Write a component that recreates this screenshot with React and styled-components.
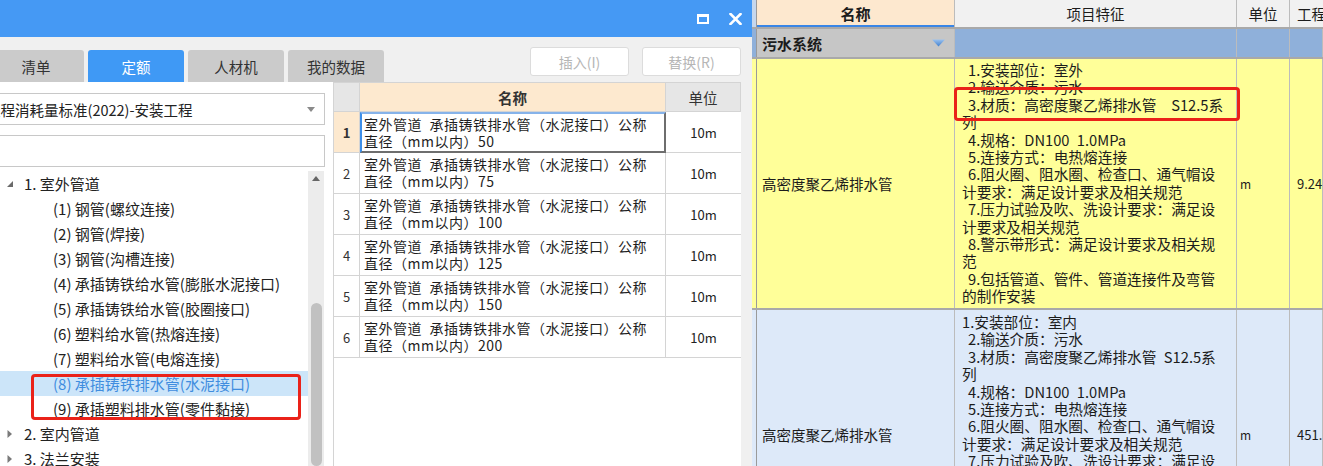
import React from "react";
import styled, { createGlobalStyle } from "styled-components";

const GlobalStyle = createGlobalStyle`
  html, body {
    margin: 0;
    padding: 0;
    background: #fff;
    overflow: hidden;
  }
  body {
    font-family: "Noto Sans CJK SC", "Noto Sans", sans-serif;
    color: #222;
  }
  * { box-sizing: border-box; }
`;

const Screen = styled.div`
  display: flex;
  width: 1323px;
  height: 466px;
  overflow: hidden;
`;

/* ---------- dialog ---------- */

const Dialog = styled.div`
  flex: none;
  width: 773px;
  margin-left: -21px;
  display: flex;
  flex-direction: column;
  background: #f0f0f0;
`;

const TitleBar = styled.div`
  height: 37px;
  flex: none;
  background: #4599f4;
  display: flex;
  justify-content: flex-end;
  align-items: center;
  gap: 20px;
  padding-right: 10px;
`;

const Toolbar = styled.div`
  height: 45px;
  flex: none;
  display: flex;
  justify-content: space-between;
  padding: 0 11px 0 9px;
`;

const Tabs = styled.div`
  display: flex;
  gap: 4px;
  align-self: flex-end;
`;

const Tab = styled.div`
  width: 96px;
  height: 32px;
  display: flex;
  align-items: center;
  justify-content: center;
  font-size: 14.5px;
  border-radius: 3px 3px 0 0;
  background: ${(p) => (p.active ? "#3f99f5" : "#cbcbcb")};
  color: ${(p) => (p.active ? "#fff" : "#333")};
`;

const Buttons = styled.div`
  display: flex;
  gap: 13px;
  margin-top: 10px;
  align-self: flex-start;
`;

const Button = styled.div`
  width: 99px;
  height: 29px;
  border: 1px solid #dcdcdc;
  border-radius: 3px;
  background: #fff;
  color: #b6b6b6;
  font-size: 14px;
  display: flex;
  align-items: center;
  justify-content: center;
`;

const Content = styled.div`
  flex: 1;
  min-height: 0;
  display: flex;
  padding-right: 11px;
`;

const LeftPanel = styled.div`
  width: 354px;
  flex: none;
  background: #fff;
  display: flex;
  flex-direction: column;
`;

const Select = styled.div`
  margin-top: 11px;
  width: 346px;
  height: 32px;
  border: 1px solid #c8c8c8;
  display: flex;
  align-items: center;
  justify-content: space-between;
  padding: 0 9px 0 6px;
  font-size: 14.5px;
  white-space: nowrap;
`;

const SearchBox = styled.div`
  margin-top: 10px;
  width: 346px;
  height: 32px;
  border: 1px solid #c8c8c8;
`;

const TreeWrap = styled.div`
  margin-top: 4px;
  width: 345px;
  flex: 1;
  min-height: 0;
  display: flex;
  overflow: hidden;
`;

const TreeList = styled.div`
  flex: 1;
  position: relative;
`;

const TreeItem = styled.div`
  height: 25px;
  display: flex;
  align-items: center;
  padding-left: ${(p) => p.indent}px;
  font-size: 15px;
  white-space: nowrap;
  background: ${(p) => (p.selected ? "#cce5f9" : "transparent")};
  color: ${(p) => (p.selected ? "#3f8ddf" : "#222")};
`;

const Toggle = styled.span`
  width: 18px;
  display: inline-flex;
  align-items: center;
`;

const Scrollbar = styled.div`
  width: 16px;
  flex: none;
  background: #ececec;
  display: flex;
  flex-direction: column;
`;

const ScrollArrow = styled.div`
  height: 14px;
  display: flex;
  align-items: center;
  justify-content: center;
`;

const ScrollThumb = styled.div`
  margin: 118px 2px 0 3px;
  flex: 1;
  background: #c1c1c1;
  border-radius: 6px;
`;

const Annotation = styled.div`
  position: absolute;
  left: ${(p) => p.left}px;
  top: ${(p) => p.top}px;
  width: ${(p) => p.width}px;
  height: ${(p) => p.height}px;
  border: 3px solid #ea2219;
  border-radius: 4px;
  pointer-events: none;
`;

/* ---------- middle table ---------- */

const MidTable = styled.div`
  flex: 1;
  background: #fff;
  border-left: 1px solid #d4d4d4;
  border-top: 1px solid #d4d4d4;
  display: flex;
  flex-direction: column;
`;

const MidRow = styled.div`
  display: grid;
  grid-template-columns: 26px 306px 1fr;
  height: ${(p) => (p.header ? 29 : 41)}px;
`;

const MidHead = styled.div`
  background: ${(p) => p.bg};
  border-right: 1px solid #d4d4d4;
  border-bottom: 1px solid #d4d4d4;
  display: flex;
  align-items: center;
  justify-content: center;
  font-size: 14.5px;
  font-weight: ${(p) => (p.bold ? 700 : 400)};
  color: #333;
`;

const NumCell = styled.div`
  background: ${(p) => (p.active ? "#fde9cf" : "#fff")};
  border-right: 1px solid #d4d4d4;
  border-bottom: 1px solid #d4d4d4;
  display: flex;
  align-items: center;
  justify-content: center;
  font-size: 13px;
  font-weight: ${(p) => (p.active ? 700 : 400)};
  color: #333;
`;

const NameCell = styled.div`
  border: ${(p) => (p.focused ? "2px solid #6e6e6e" : "none")};
  border-left-color: ${(p) => (p.focused ? "#3e8fe8" : "transparent")};
  border-top-color: ${(p) => (p.focused ? "#86b3ea" : "transparent")};
  border-right: ${(p) => (p.focused ? "2px solid #6e6e6e" : "1px solid #d4d4d4")};
  border-bottom: ${(p) => (p.focused ? "2px solid #6e6e6e" : "1px solid #d4d4d4")};
  padding: 0 ${(p) => (p.focused ? 2 : 4)}px;
  display: flex;
  flex-direction: column;
  justify-content: center;
  font-size: 14px;
  line-height: 17px;
  letter-spacing: 0.5px;
  white-space: nowrap;
  color: #1e1e1e;
`;

const UnitCell = styled.div`
  border-bottom: 1px solid #d4d4d4;
  display: flex;
  align-items: center;
  justify-content: center;
  font-size: 13px;
  color: #222;
`;

/* ---------- background bill table ---------- */

const BillTable = styled.div`
  flex: 1;
  display: flex;
  flex-direction: column;
  min-width: 0;
`;

const BillRow = styled.div`
  display: grid;
  grid-template-columns: 5px 198px 282px 53px 1fr;
  height: ${(p) => p.h}px;
  flex: none;
  border-bottom: 2px solid #a9a9a9;
  background: ${(p) => p.bg};
`;

const BillCell = styled.div`
  position: relative;
  border-right: 1px solid ${(p) => p.line || "#bcbcbc"};
  background: ${(p) => p.bg || "transparent"};
  display: flex;
  align-items: ${(p) => p.align || "center"};
  justify-content: ${(p) => p.justify || "flex-start"};
  padding-left: ${(p) => p.pl || 0}px;
  font-size: ${(p) => p.size || 14.5}px;
  font-weight: ${(p) => (p.bold ? 700 : 400)};
  color: #1c1c1c;
  white-space: nowrap;
  box-shadow: ${(p) => (p.underline ? "inset 0 -2px 0 #3a86e6" : "none")};
`;

const Features = styled.div`
  display: flex;
  flex-direction: column;
  padding: ${(p) => p.pt}px 0 0 7px;
  font-size: 14.7px;
  line-height: 17.4px;
`;

const FeatureLine = styled.div`
  white-space: pre;
  padding-left: ${(p) => (p.indent ? 6 : 0)}px;
`;

const DropCaret = styled.span`
  margin-left: auto;
  margin-right: 9px;
  display: inline-flex;
`;

/* ---------- data ---------- */

const treeItems = [
  { label: "1. 室外管道", level: 0, open: true },
  { label: "(1) 钢管(螺纹连接)", level: 1 },
  { label: "(2) 钢管(焊接)", level: 1 },
  { label: "(3) 钢管(沟槽连接)", level: 1 },
  { label: "(4) 承插铸铁给水管(膨胀水泥接口)", level: 1 },
  { label: "(5) 承插铸铁给水管(胶圈接口)", level: 1 },
  { label: "(6) 塑料给水管(热熔连接)", level: 1 },
  { label: "(7) 塑料给水管(电熔连接)", level: 1 },
  { label: "(8) 承插铸铁排水管(水泥接口)", level: 1, selected: true },
  { label: "(9) 承插塑料排水管(零件黏接)", level: 1 },
  { label: "2. 室内管道", level: 0, open: false },
  { label: "3. 法兰安装", level: 0, open: false },
];

const quotaRows = ["50", "75", "100", "125", "150", "200"];

const features = (first, gap) => [
  { t: first, indent: first.endsWith("室外") },
  { t: "2.输送介质：污水", indent: true },
  { t: `3.材质：高密度聚乙烯排水管${gap}S12.5系`, indent: true },
  { t: "列" },
  { t: "4.规格：DN100\u20021.0MPa", indent: true },
  { t: "5.连接方式：电热熔连接", indent: true },
  { t: "6.阻火圈、阻水圈、检查口、通气帽设", indent: true },
  { t: "计要求：满足设计要求及相关规范" },
  { t: "7.压力试验及吹、洗设计要求：满足设", indent: true },
  { t: "计要求及相关规范" },
  { t: "8.警示带形式：满足设计要求及相关规", indent: true },
  { t: "范" },
  { t: "9.包括管道、管件、管道连接件及弯管", indent: true },
  { t: "的制作安装" },
];

const billRows = [
  { bg: "#ffff99", first: "1.安装部位：室外", gap: "\u2002\u2002", qty: "9.24", pt: 2, mark: true },
  { bg: "#dde9f9", first: "1.安装部位：室内", gap: "\u2002", qty: "451.", pt: 3 },
];

/* ---------- small drawings ---------- */

const MaxIcon = () => (
  <svg width="12" height="10" viewBox="0 0 12 10">
    <rect x="1" y="1.5" width="10" height="7.5" fill="none" stroke="#fff" strokeWidth="2" />
    <rect x="0" y="0" width="12" height="3" fill="#fff" />
  </svg>
);

const CloseIcon = () => (
  <svg width="13" height="12" viewBox="0 0 13 12">
    <path d="M1.5 1 L11.5 11 M11.5 1 L1.5 11" stroke="#fff" strokeWidth="2.6" strokeLinecap="square" />
  </svg>
);

const TreeToggle = ({ open }) => (
  <Toggle>
    {open ? (
      <svg width="8" height="8" viewBox="0 0 8 8">
        <polygon points="7,1 7,7 1,7" fill="#6a6a6a" />
      </svg>
    ) : (
      <svg width="7" height="10" viewBox="0 0 7 10">
        <polygon points="1.5,1 6,5 1.5,9" fill="#7a7a7a" />
      </svg>
    )}
  </Toggle>
);

const SmallCaret = ({ up, color = "#8a8a8a" }) => (
  <svg width="8" height="5" viewBox="0 0 8 5">
    <polygon points={up ? "0,5 8,5 4,0" : "0,0 8,0 4,5"} fill={color} />
  </svg>
);

const BlueCaret = () => (
  <svg width="13" height="8" viewBox="0 0 13 8">
    <defs>
      <linearGradient id="bc" x1="0" y1="0" x2="0" y2="1">
        <stop offset="0" stopColor="#9cc2ee" />
        <stop offset="1" stopColor="#3f7fcf" />
      </linearGradient>
    </defs>
    <polygon points="0,0.5 13,0.5 6.5,7.5" fill="url(#bc)" />
  </svg>
);

/* ---------- page ---------- */

export default function App() {
  return (
    <Screen>
      <GlobalStyle />
      <Dialog>
        <TitleBar>
          <MaxIcon />
          <CloseIcon />
        </TitleBar>
        <Toolbar>
          <Tabs>
            <Tab>清单</Tab>
            <Tab active>定额</Tab>
            <Tab>人材机</Tab>
            <Tab>我的数据</Tab>
          </Tabs>
          <Buttons>
            <Button>插入(I)</Button>
            <Button>替换(R)</Button>
          </Buttons>
        </Toolbar>
        <Content>
          <LeftPanel>
            <Select>
              <span>工程消耗量标准(2022)-安装工程</span>
              <SmallCaret />
            </Select>
            <SearchBox />
            <TreeWrap>
              <TreeList>
                {treeItems.map((it) => (
                  <TreeItem
                    key={it.label}
                    indent={it.level === 0 ? 27 : 74}
                    selected={it.selected}
                  >
                    {it.level === 0 && <TreeToggle open={it.open} />}
                    {it.label}
                  </TreeItem>
                ))}
                <Annotation left={52} top={203} width={270} height={46} />
              </TreeList>
              <Scrollbar>
                <ScrollArrow>
                  <SmallCaret up color="#666" />
                </ScrollArrow>
                <ScrollThumb />
              </Scrollbar>
            </TreeWrap>
          </LeftPanel>
          <MidTable>
            <MidRow header>
              <MidHead bg="#e6e6e6" />
              <MidHead bg="#fde9cf" bold>
                名称
              </MidHead>
              <MidHead bg="#e6e6e6">单位</MidHead>
            </MidRow>
            {quotaRows.map((d, i) => (
              <MidRow key={d}>
                <NumCell active={i === 0}>{i + 1}</NumCell>
                <NameCell focused={i === 0}>
                  <span>室外管道&ensp;承插铸铁排水管（水泥接口）公称</span>
                  <span>直径（mm以内）{d}</span>
                </NameCell>
                <UnitCell>10m</UnitCell>
              </MidRow>
            ))}
          </MidTable>
        </Content>
      </Dialog>

      <BillTable>
        <BillRow h={29} bg="#f1f1f1">
          <BillCell bg="#c5d7ee" line="#9a9a9a" />
          <BillCell bg="#fde8cf" bold justify="center" size={15} underline>
            名称
          </BillCell>
          <BillCell justify="center">项目特征</BillCell>
          <BillCell justify="center">单位</BillCell>
          <BillCell pl={7}>工程量</BillCell>
        </BillRow>
        <BillRow h={30} bg="#8fb0da">
          <BillCell line="#9a9a9a" />
          <BillCell bg="#c6c6c6" bold pl={5} size={15}>
            污水系统
            <DropCaret>
              <BlueCaret />
            </DropCaret>
          </BillCell>
          <BillCell />
          <BillCell />
          <BillCell />
        </BillRow>
        {billRows.map((r) => (
          <BillRow key={r.qty} h={251} bg={r.bg}>
            <BillCell line="#9a9a9a" />
            <BillCell pl={5}>高密度聚乙烯排水管</BillCell>
            <BillCell align="flex-start">
              <Features pt={r.pt}>
                {features(r.first, r.gap).map((l, i) => (
                  <FeatureLine key={i} indent={l.indent}>
                    {l.t}
                  </FeatureLine>
                ))}
              </Features>
              {r.mark && <Annotation left={-1} top={28} width={286} height={34} />}
            </BillCell>
            <BillCell pl={3} size={12}>
              m
            </BillCell>
            <BillCell pl={7} size={13}>
              {r.qty}
            </BillCell>
          </BillRow>
        ))}
      </BillTable>
    </Screen>
  );
}
